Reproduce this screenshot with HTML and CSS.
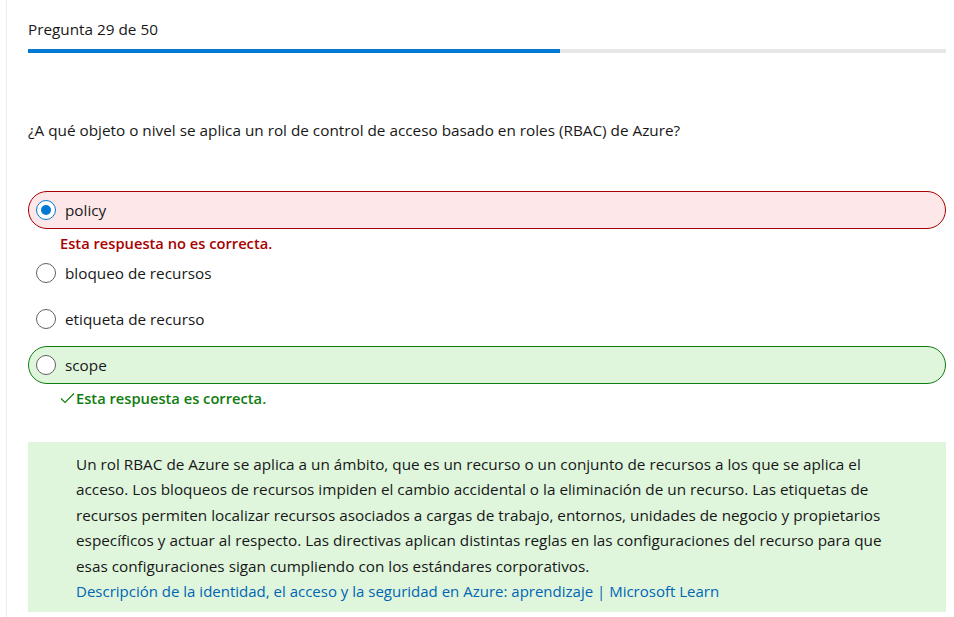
FILE: index.html
```html
<!DOCTYPE html>
<html lang="es">
<head>
<meta charset="utf-8">
<title>Pregunta 29 de 50</title>
<link rel="stylesheet" href="styles.css">
</head>
<body>
<div class="page">
  <div class="header">
    <div class="counter">Pregunta 29 de 50</div>
    <div class="progress"><div class="progress-fill" style="width:58%"></div></div>
  </div>
  <p class="question">¿A qué objeto o nivel se aplica un rol de control de acceso basado en roles (RBAC) de Azure?</p>
  <div class="options">
    <div class="option option-wrong">
      <span class="radio radio-checked"></span>
      <span class="label">policy</span>
    </div>
    <div class="feedback feedback-wrong">Esta respuesta no es correcta.</div>
    <div class="option">
      <span class="radio"></span>
      <span class="label">bloqueo de recursos</span>
    </div>
    <div class="option">
      <span class="radio"></span>
      <span class="label">etiqueta de recurso</span>
    </div>
    <div class="option option-right">
      <span class="radio"></span>
      <span class="label">scope</span>
    </div>
    <div class="feedback feedback-right"><svg class="check" width="15" height="12" viewBox="0 0 15 12"><path d="M1 6.5 L5 10.5 L14 1.5" fill="none" stroke="#107c10" stroke-width="1.1"/></svg>Esta respuesta es correcta.</div>
  </div>
  <div class="explanation">
    <p>Un rol RBAC de Azure se aplica a un ámbito, que es un recurso o un conjunto de recursos a los que se aplica el acceso. Los bloqueos de recursos impiden el cambio accidental o la eliminación de un recurso. Las etiquetas de recursos permiten localizar recursos asociados a cargas de trabajo, entornos, unidades de negocio y propietarios específicos y actuar al respecto. Las directivas aplican distintas reglas en las configuraciones del recurso para que esas configuraciones sigan cumpliendo con los estándares corporativos.<br><a href="#" class="link">Descripción de la identidad, el acceso y la seguridad en Azure: aprendizaje | Microsoft Learn</a></p>
  </div>
</div>
</body>
</html>
```
FILE: styles.css
```css
html, body {
  margin: 0;
  padding: 0;
  background: #ffffff;
}
body {
  font-family: "Open Sans", "Noto Sans", sans-serif;
  font-size: 15.3px;
  color: #171717;
}
.page {
  margin-left: 6px;
  border-left: 1px solid #ececec;
  padding: 19px 8px 0 21px;
  min-height: 617px;
  box-sizing: border-box;
}
.counter {
  line-height: 20px;
}
.progress {
  margin-top: 10px;
  height: 4px;
  background: #e6e6e6;
}
.progress-fill {
  height: 100%;
  background: #0078d4;
}
.question {
  margin: 67px 0 0;
  line-height: 20px;
}
.options {
  margin-top: 51px;
}
.option {
  display: flex;
  align-items: center;
  height: 38px;
  box-sizing: border-box;
  padding-left: 7px;
  border: 1px solid transparent;
  border-radius: 19px;
  margin-bottom: 8px;
}
.option-wrong {
  background: #fde7e9;
  border-color: #a80000;
  margin-bottom: 0;
}
.option-right {
  background: #dff6dd;
  border-color: #107c10;
  margin-bottom: 0;
}
.radio {
  width: 20px;
  height: 20px;
  box-sizing: border-box;
  border: 1px solid #616161;
  border-radius: 50%;
  background: #ffffff;
  display: flex;
  align-items: center;
  justify-content: center;
  flex: none;
}
.radio-checked {
  border-color: #0078d4;
}
.radio-checked::after {
  content: "";
  width: 10px;
  height: 10px;
  border-radius: 50%;
  background: #0078d4;
}
.label {
  margin-left: 9px;
  line-height: 20px;
}
.feedback {
  display: flex;
  align-items: center;
  margin: 4px 0 1px 32px;
  line-height: 20px;
  font-size: 14.7px;
  font-weight: 600;
}
.feedback-wrong {
  color: #a80000;
}
.feedback-right {
  color: #107c10;
  margin-bottom: 0;
}
.check {
  margin-right: 1px;
}
.explanation {
  margin-top: 34px;
  background: #dff6dd;
  padding: 10px 48px 8px;
}
.explanation p {
  margin: 0;
  line-height: 25.4px;
}
.link {
  color: #0065b3;
  font-size: 15px;
  text-decoration: none;
}
```
